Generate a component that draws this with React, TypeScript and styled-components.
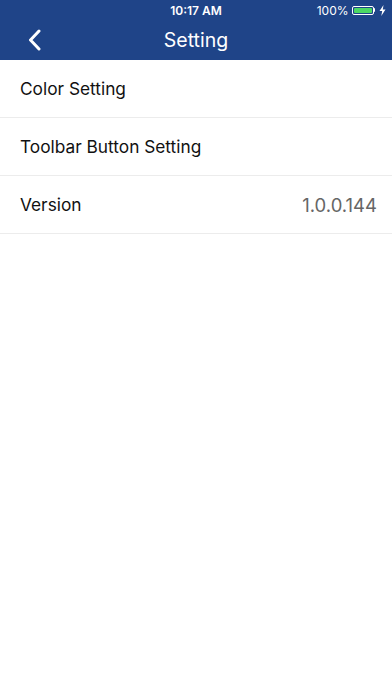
import styled, { createGlobalStyle } from "styled-components";

const GlobalStyle = createGlobalStyle`
  html, body {
    margin: 0;
    padding: 0;
    background: #ffffff;
    font-family: Inter, Roboto, "Liberation Sans", Arial, sans-serif;
  }
`;

const rows = [
  { label: "Color Setting" },
  { label: "Toolbar Button Setting" },
  { label: "Version", value: "1.0.0.144" },
];

const App: React.FC = () => {
  return (
    <Page>
      <GlobalStyle />
      <Header>
        <StatusBar>
          <Time>10:17 AM</Time>
          <StatusRight>
            <span>100%</span>
            <Battery>
              <BatteryFill />
            </Battery>
            <BatteryCap />
            <svg width="7" height="11" viewBox="0 0 7 11">
              <path d="M4.5 0 L0.5 6 H3.2 L2.3 11 L6.5 4.6 H3.8 Z" fill="#fff" />
            </svg>
          </StatusRight>
        </StatusBar>
        <NavBar>
          <Back>
            <svg width="13" height="22" viewBox="0 0 13 22">
              <path
                d="M11 2 L2.5 11 L11 20"
                fill="none"
                stroke="#fff"
                strokeWidth="3"
                strokeLinecap="round"
                strokeLinejoin="round"
              />
            </svg>
          </Back>
          <Title>Setting</Title>
        </NavBar>
      </Header>
      <List>
        {rows.map((r) => (
          <Row key={r.label}>
            <Label>{r.label}</Label>
            {r.value && <Value>{r.value}</Value>}
          </Row>
        ))}
      </List>
    </Page>
  );
};

export default App;

const Page = styled.div`
  width: 392px;
  height: 696px;
  background: #fff;
  overflow: hidden;
`;
const Header = styled.div`
  background: #1f4488;
  height: 60px;
  display: flex;
  flex-direction: column;
`;
const StatusBar = styled.div`
  height: 20px;
  position: relative;
  display: flex;
  align-items: center;
  justify-content: center;
  color: #fff;
`;
const Time = styled.div`
  font-size: 12px;
  font-weight: 600;
`;
const StatusRight = styled.div`
  position: absolute;
  right: 6px;
  top: 0;
  height: 20px;
  display: flex;
  align-items: center;
  font-size: 12px;
  font-weight: 400;
  span {
    margin-right: 3px;
  }
  svg {
    margin-left: 4px;
  }
`;
const Battery = styled.div`
  width: 22px;
  height: 9px;
  border: 1px solid #fff;
  border-radius: 2px;
  padding: 1px;
  box-sizing: border-box;
  display: flex;
`;
const BatteryFill = styled.div`
  flex: 1;
  background: #4cd964;
  border-radius: 1px;
`;
const BatteryCap = styled.div`
  width: 1.5px;
  height: 4px;
  background: #fff;
  border-radius: 0 1px 1px 0;
`;
const NavBar = styled.div`
  flex: 1;
  position: relative;
  display: flex;
  align-items: center;
  justify-content: center;
`;
const Back = styled.div`
  position: absolute;
  left: 28px;
  top: 9px;
  display: flex;
`;
const Title = styled.div`
  color: #fff;
  font-size: 19.5px;
  font-weight: 400;
  margin-top: -1px;
`;
const List = styled.div`
  display: flex;
  flex-direction: column;
`;
const Row = styled.div`
  height: 57px;
  display: flex;
  align-items: center;
  justify-content: space-between;
  padding: 0 15px 0 20px;
  border-bottom: 1px solid #ececec;
`;
const Label = styled.div`
  font-size: 17.3px;
  color: #111;
`;
const Value = styled.div`
  font-size: 18.5px;
  color: #666;
`;
